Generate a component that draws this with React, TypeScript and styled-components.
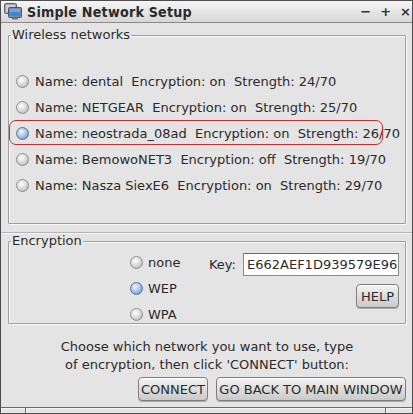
import React from "react";
import styled, { createGlobalStyle } from "styled-components";

const Global = createGlobalStyle`
  html, body { margin: 0; padding: 0; background: #e4e4e4; }
  body { font-family: "DejaVu Sans", sans-serif; color: #2b2b2b; }
  * { box-sizing: border-box; }
`;

const Window = styled.div`
  width: 413px;
  height: 414px;
  display: flex;
  flex-direction: column;
  border: 1px solid #4d4d4d;
  background: #e4e4e4;
  overflow: hidden;
`;

const TitleBar = styled.div`
  height: 22px;
  display: flex;
  align-items: center;
  padding: 0 1px 0 3px;
  background: linear-gradient(#f6f6f6, #d6d6d6);
  border-bottom: 1px solid #8a8a8a;
  flex: none;
`;

const Title = styled.div`
  font-family: "DejaVu Sans Condensed", "DejaVu Sans", sans-serif;
  font-weight: bold;
  font-size: 14.2px;
  letter-spacing: 0.2px;
  color: #2a2a2a;
  margin-left: 5px;
  flex: 1;
`;

const Controls = styled.div`
  display: flex;
  gap: 9px;
  font-weight: bold;
  font-size: 13px;
  color: #333;
`;

const Panel = styled.div<{ $pad: string }>`
  padding: ${(p) => p.$pad};
  flex: none;
`;

const Separator = styled.div`
  height: 1px;
  background: #b5b5b5;
  box-shadow: 0 1px 0 #f6f6f6;
  flex: none;
`;

const Group = styled.fieldset<{ $h: number; $pad: string }>`
  margin: 0;
  height: ${(p) => p.$h}px;
  padding: ${(p) => p.$pad};
  border: 1px solid #9e9e9e;
  box-shadow: inset 1px 1px 0 #f7f7f7, 1px 1px 0 #f7f7f7;
  border-radius: 1px;
  min-width: 0;
`;

const Legend = styled.legend`
  font-size: 13px;
  padding: 0 1px;
  margin-left: -5px;
  line-height: 16px;
`;

const NetList = styled.div`
  display: flex;
  flex-direction: column;
`;

const NetRow = styled.div`
  position: relative;
  height: 26px;
  display: flex;
  align-items: center;
  gap: 6px;
  font-size: 13px;
  white-space: pre;
`;

const Highlight = styled.div`
  position: absolute;
  left: -7px;
  top: 0px;
  width: 374px;
  height: 25px;
  border: 1.5px solid #d22a2a;
  border-radius: 7px;
  pointer-events: none;
`;

const Radio = styled.span<{ $on?: boolean }>`
  width: 13px;
  height: 13px;
  border-radius: 50%;
  flex: none;
  border: 1px solid ${(p) => (p.$on ? "#5a7496" : "#8e8e8e")};
  background: ${(p) =>
    p.$on
      ? "radial-gradient(circle at 40% 35%, #f4f9ff 0%, #a9c8ec 45%, #5d87bd 100%)"
      : "radial-gradient(circle at 40% 35%, #ffffff 0%, #dedede 45%, #a8a8a8 100%)"};
`;

const EncGrid = styled.div`
  display: flex;
  padding-left: 114px;
`;

const EncOptions = styled.div`
  display: flex;
  flex-direction: column;
  width: 74px;
`;

const EncRow = styled.div`
  height: 26px;
  display: flex;
  align-items: center;
  gap: 5px;
  font-size: 13px;
`;

const KeyCol = styled.div`
  flex: 1;
  display: flex;
  flex-direction: column;
  align-items: flex-end;
  gap: 8px;
  padding-top: 4px;
`;

const KeyRow = styled.div`
  display: flex;
  align-items: center;
  gap: 7px;
  font-size: 13px;
`;

const KeyInput = styled.div`
  width: 156px;
  height: 23px;
  background: #fff;
  border: 1px solid #8a8a8a;
  border-top-color: #6a6a6a;
  font-size: 13px;
  line-height: 21px;
  padding-left: 3px;
  white-space: nowrap;
  overflow: hidden;
  display: flex;
  align-items: center;
`;

const Caret = styled.span`
  display: inline-block;
  width: 1px;
  height: 15px;
  background: #222;
  margin-left: 1px;
`;

const Button = styled.button<{ $w: number }>`
  width: ${(p) => p.$w}px;
  height: 24px;
  font-family: "DejaVu Sans", sans-serif;
  font-size: 13px;
  color: #2b2b2b;
  border: 1px solid #7d7d7d;
  border-radius: 4px;
  background: linear-gradient(#f4f4f4, #d9d9d9 60%, #cacaca);
  box-shadow: inset 0 1px 0 #ffffff, 0 1px 0 #a9a9a9;
  padding: 0;
  white-space: nowrap;
`;

const Message = styled.div`
  font-size: 13px;
  line-height: 18px;
  text-align: center;
  padding: 14px 0 0;
`;

const ButtonRow = styled.div`
  display: flex;
  justify-content: flex-end;
  gap: 8px;
  padding: 3px 0 0 0;
`;

const StatusBar = styled.div`
  margin-top: auto;
  height: 6px;
  display: grid;
  grid-template-columns: 25px 1fr 26px;
  border-top: 1px solid #6a6a6a;
  flex: none;
`;

const StatusCell = styled.div<{ $last?: boolean }>`
  border-right: ${(p) => (p.$last ? "none" : "1px solid #6a6a6a")};
  box-shadow: inset 1px 1px 0 #f4f4f4;
`;

const WindowIcon = () => (
  <svg width="18" height="17" viewBox="0 0 18 17">
    <rect x="0.5" y="0.5" width="12" height="10" rx="1" fill="#9aa4b2" stroke="#5b6573" />
    <rect x="2" y="2" width="9" height="7" fill="#c7d3e2" />
    <rect x="4.5" y="4.5" width="13" height="10" rx="1" fill="#7f8a99" stroke="#4a5462" />
    <rect x="6" y="6" width="10" height="7" fill="#3f84d6" />
    <rect x="6" y="6" width="10" height="3" fill="#6aa6ec" />
    <rect x="8" y="14.5" width="6" height="2" fill="#6a7483" />
  </svg>
);

const networks = [
  { name: "dental", enc: "on", str: "24/70" },
  { name: "NETGEAR", enc: "on", str: "25/70" },
  { name: "neostrada_08ad", enc: "on", str: "26/70", sel: true },
  { name: "BemowoNET3", enc: "off", str: "19/70" },
  { name: "Nasza SiexE6", enc: "on", str: "29/70" },
];

export default function App() {
  return (
    <Window>
      <Global />
      <TitleBar>
        <WindowIcon />
        <Title>Simple Network Setup</Title>
        <Controls>
          <span>−</span>
          <span>+</span>
          <span>×</span>
        </Controls>
      </TitleBar>
      <Panel $pad="4px 6px 8px 7px">
        <Group $h={197} $pad="25px 6px 0 7px">
          <Legend>Wireless networks</Legend>
          <NetList>
            {networks.map((n) => (
              <NetRow key={n.name}>
                <Radio $on={n.sel} />
                <span>{`Name: ${n.name}  Encryption: ${n.enc}  Strength: ${n.str}`}</span>
                {n.sel && <Highlight />}
              </NetRow>
            ))}
          </NetList>
        </Group>
      </Panel>
      <Separator />
      <Panel $pad="0px 6px 0 7px">
        <Group $h={91} $pad="0px 6px 0 7px">
          <Legend>Encryption</Legend>
          <EncGrid>
            <EncOptions>
              <EncRow>
                <Radio />
                <span>none</span>
              </EncRow>
              <EncRow>
                <Radio $on />
                <span>WEP</span>
              </EncRow>
              <EncRow>
                <Radio />
                <span>WPA</span>
              </EncRow>
            </EncOptions>
            <KeyCol>
              <KeyRow>
                <span>Key:</span>
                <KeyInput>
                  E662AEF1D939579E96
                  <Caret />
                </KeyInput>
              </KeyRow>
              <Button $w={43}>HELP</Button>
            </KeyCol>
          </EncGrid>
        </Group>
        <Message>
          Choose which network you want to use, type
          <br />
          of encryption, then click 'CONNECT' button:
        </Message>
        <ButtonRow>
          <Button $w={70}>CONNECT</Button>
          <Button $w={190}>GO BACK TO MAIN WINDOW</Button>
        </ButtonRow>
      </Panel>
      <StatusBar>
        <StatusCell />
        <StatusCell />
        <StatusCell $last />
      </StatusBar>
    </Window>
  );
}
